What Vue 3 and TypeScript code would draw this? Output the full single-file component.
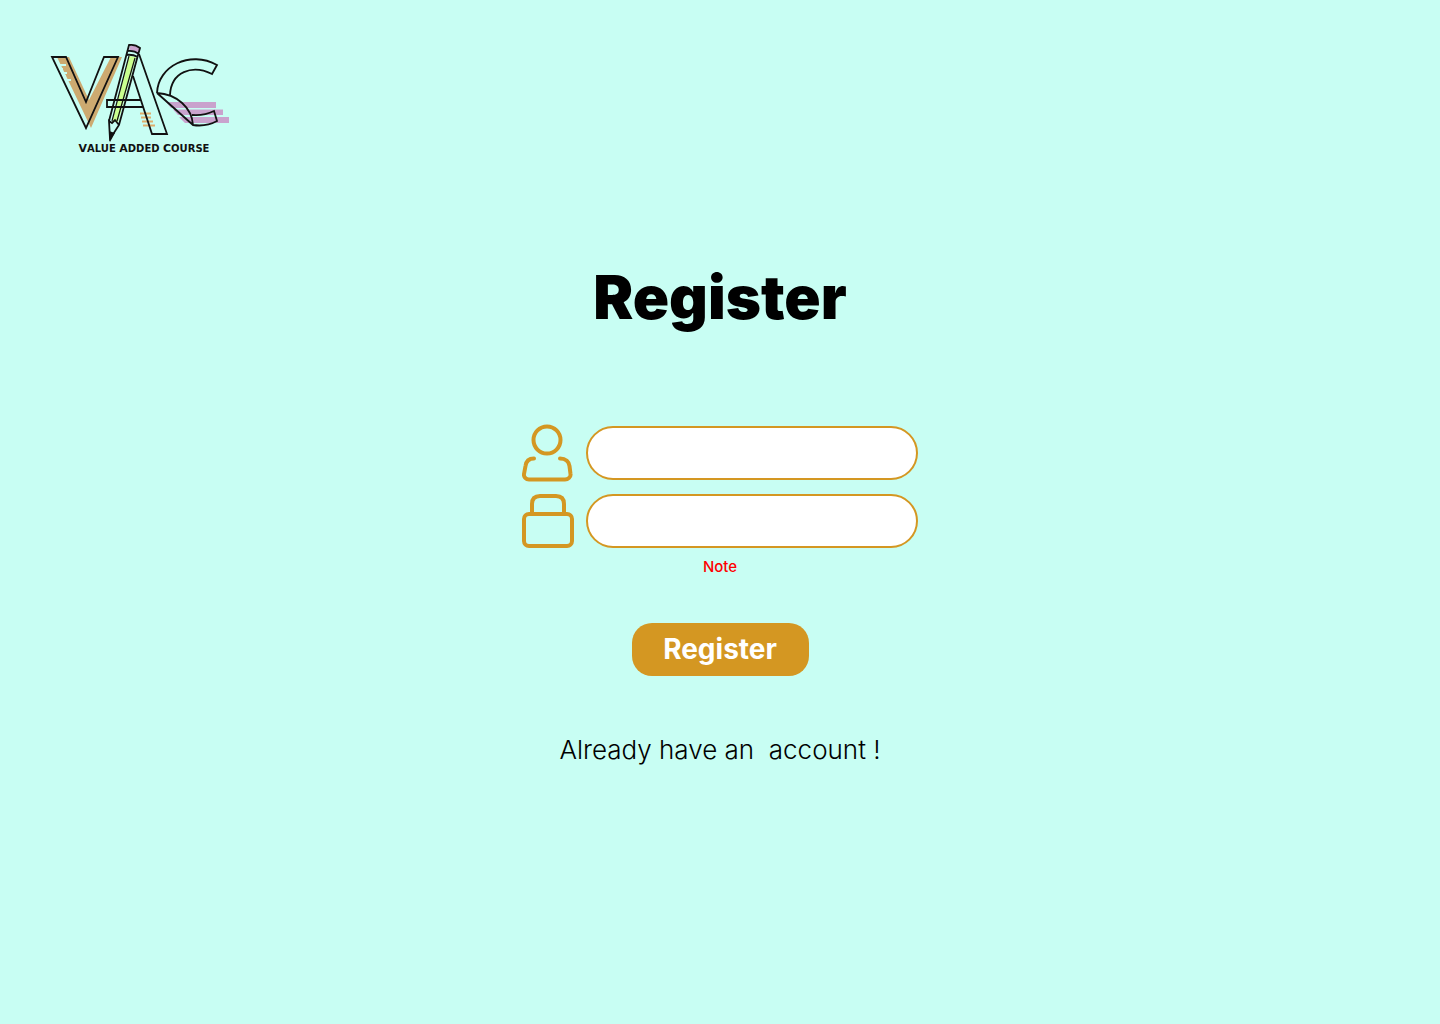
<script setup lang="ts">
import { ref } from 'vue'

const username = ref('')
const password = ref('')
const note = ref('Note')
</script>

<template>
  <div class="page">
    <header class="header">
      <svg class="logo" viewBox="40 35 200 125" role="img" aria-label="Value Added Course">
        <path d="M57 57H69L89 100L111 57H122L91 128Z" fill="#cdaa70" />
        <path d="M54 65H66M54 69H63M58 73H67M58 76H66M62 80H71" stroke="#c8fef3" stroke-width="2" />
        <path d="M166 102H216V108H171ZM173 109.500H223V115H178ZM179 117H229V123H185Z" fill="#c9a3cd" />
        <path d="M140 113.500H151M141 117.500H151M142 121.500H153M143 125.500H155" stroke="#dfae6c" stroke-width="2" />
        <path d="M129 56L136 57L118 122L112 122Z" fill="#caff8f" />
        <path d="M130 46Q136 45 140 48L138 53L129 51Z" fill="#c9a3cd" />
        <g fill="none" stroke="#111" stroke-width="1.800">
          <path d="M52 57H66L86 102L104 57H118L86 128Z" />
          <path d="M109 121L129 45Q135 44 140 48L138 55L119 125L110 139L109 121L112 123L115 120L119 125M127 51Q134 50 139 54M126 55Q132 54 138 57" />
          <path d="M129 56L112 121M135 58L117 121" stroke-width="1.200" />
          <path d="M139 54L167 134H152L133 76M141 100H107V107H143" />
          <path d="M157 93C158 66 190 50 217 65L212 74C192 64 171 72 170 95M157 93C177 94 192 108 193 125Q206 127 217 121L214 111Q204 116 192 115M157 93L193 125" />
        </g>
        <path d="M109 131L110 142L115 133Z" fill="#111" />
        <text class="logo-text" x="144" y="152" text-anchor="middle"><tspan>V</tspan><tspan class="small">ALUE </tspan><tspan>A</tspan><tspan class="small">DDED </tspan><tspan>C</tspan><tspan class="small">OURSE</tspan></text>
      </svg>
    </header>

    <main class="main">
      <h1 class="title">Register</h1>
      <form class="form" @submit.prevent>
        <div class="row">
          <label for="username" aria-label="Username">
            <svg class="icon" viewBox="0 0 52 58">
              <circle cx="25" cy="16" r="13.500" />
              <path d="M12 34.500C6 34.500 4 38 3.500 42L2 50C1.500 53 4 55.500 7 55.500H43C46 55.500 49 53 48.500 50L47.500 42C47 38 44 34.500 38 34.500" />
            </svg>
          </label>
          <input id="username" v-model="username" class="field" type="text" autocomplete="username" />
        </div>
        <div class="row">
          <label for="password" aria-label="Password">
            <svg class="icon" viewBox="0 0 52 58">
              <rect x="2" y="22" width="48" height="32" rx="5" />
              <path d="M10 22V12Q10 4 18 4H34Q42 4 42 12V22" />
            </svg>
          </label>
          <input id="password" v-model="password" class="field" type="password" autocomplete="new-password" />
        </div>
        <p class="note">{{ note }}</p>
        <button class="submit" type="submit">Register</button>
      </form>
      <a class="login" href="#login">Already have an&nbsp; account !</a>
    </main>
  </div>
</template>

<style>
body {
  margin: 0;
  background: #c8fef3;
}
</style>

<style scoped>
.page {
  min-height: 100vh;
  background: #c8fef3;
  color: #000;
  font-family: Inter, "Liberation Sans", sans-serif;
}
.header {
  padding: 35px 40px 0;
}
.logo {
  display: block;
  width: 200px;
  height: 125px;
}
.logo-text {
  font-family: "DejaVu Sans", sans-serif;
  font-size: 11px;
  font-weight: 700;
  fill: #111;
}
.small {
  font-size: 10px;
}
.main {
  display: flex;
  flex-direction: column;
  align-items: center;
}
.title {
  margin: 97px 0 89px;
  font-size: 60px;
  font-weight: 900;
  line-height: 80px;
}
.form {
  display: flex;
  flex-direction: column;
  align-items: center;
  gap: 14px;
  width: 100%;
  max-width: 396px;
}
.row {
  display: flex;
  align-items: center;
  gap: 12px;
  width: 100%;
  height: 54px;
}
.icon {
  display: block;
  width: 52px;
  height: 58px;
  fill: none;
  stroke: #d49722;
  stroke-width: 4;
  stroke-linecap: round;
  stroke-linejoin: round;
}
.field {
  box-sizing: border-box;
  flex: 1;
  min-width: 0;
  height: 54px;
  padding: 0 24px;
  border: 2px solid #d49722;
  border-radius: 27px;
  outline: none;
  background: #fff;
  font-family: inherit;
  font-size: 18px;
}
.note {
  margin: -7px 0 30px;
  color: #f00;
  font-size: 15px;
  font-weight: 500;
  line-height: 24px;
}
.submit {
  width: 177px;
  height: 53px;
  padding: 0;
  border: 0;
  border-radius: 20px;
  background: #d49722;
  color: #fff;
  font-family: inherit;
  font-size: 28px;
  font-weight: 700;
  line-height: 53px;
  cursor: pointer;
}
.login {
  margin-top: 56px;
  color: inherit;
  font-size: 26px;
  font-weight: 300;
  line-height: 36px;
  text-decoration: none;
}
</style>
